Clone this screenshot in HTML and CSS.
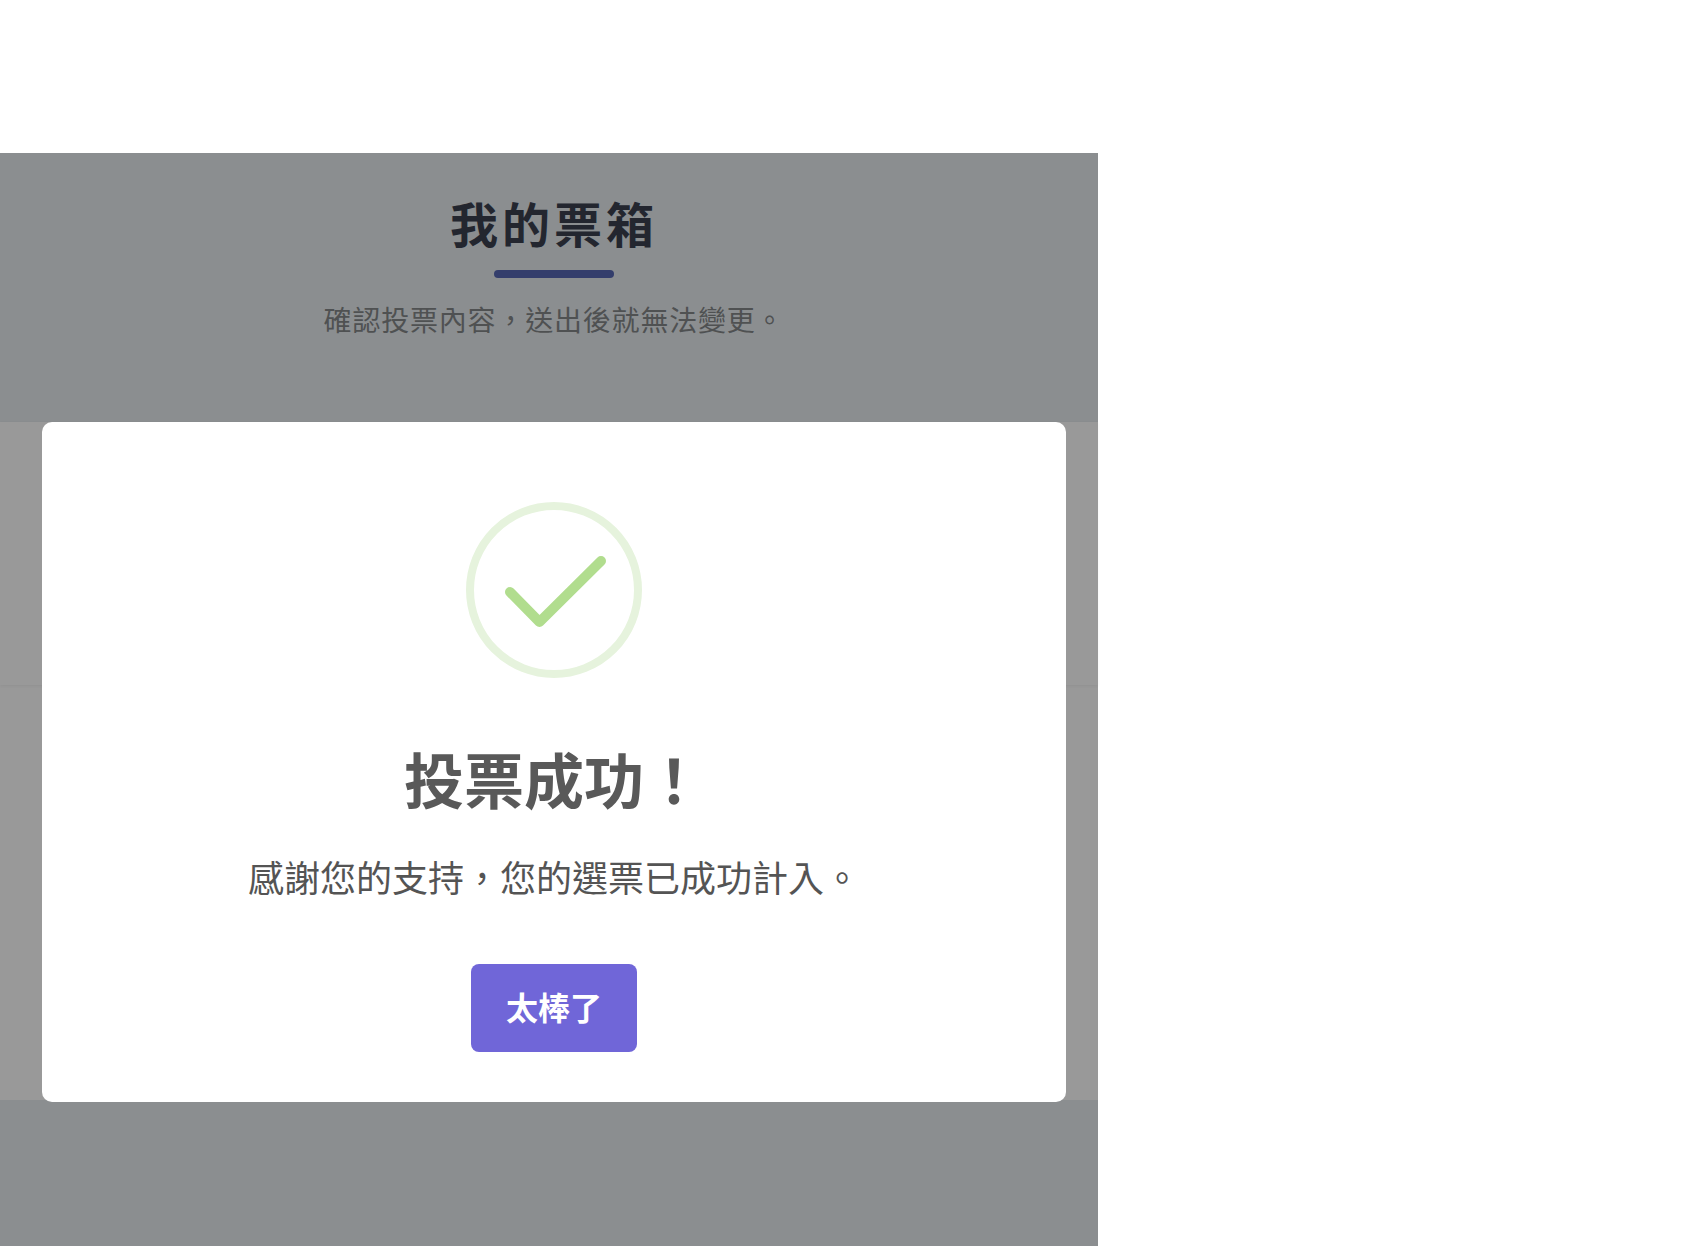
FILE: index.html
```html
<!DOCTYPE html>
<html lang="zh-Hant">

<head>
    <meta charset="UTF-8">
    <meta name="viewport" content="width=device-width, initial-scale=1.0">
    <title>我的票箱</title>
    <link rel="stylesheet" href="styles.css">
</head>

<body>
    <div class="page">
        <div class="header">
            <h1 class="title">我的票箱</h1>
            <div class="underline"></div>
            <p class="subtitle">確認投票內容，送出後就無法變更。</p>
        </div>
        <div class="rows">
            <div class="row first"></div>
            <div class="row second"></div>
        </div>
        <div class="footer"></div>

        <div class="modal">
            <svg class="icon" width="176" height="176" viewBox="0 0 176 176" fill="none">
                <circle cx="88" cy="88" r="84" stroke="#e6f3dd" stroke-width="8" />
                <path d="M44 90L73.5 120L135 59" stroke="#b1dd8e" stroke-width="10" stroke-linecap="round" stroke-linejoin="round" />
            </svg>
            <h2 class="modal-title">投票成功！</h2>
            <div class="modal-text">感謝您的支持，您的選票已成功計入。</div>
            <div class="btn">太棒了</div>
        </div>
    </div>
</body>

</html>
```

FILE: styles.css
```css
* {
    box-sizing: border-box;
}

body {
    margin: 0;
    background-color: #fff;
    font-family: "Noto Sans CJK TC", "Liberation Sans", sans-serif;
}

.page {
    position: relative;
    width: 1098px;
    height: 1246px;
    padding-top: 153px;
    display: flex;
    flex-direction: column;
}

.header {
    height: 269px;
    background-color: #8b8e90;
    display: flex;
    flex-direction: column;
    align-items: center;
    padding: 39px 0 0 10px;
}

.title {
    margin: 0;
    font-size: 48px;
    line-height: 60px;
    font-weight: 700;
    letter-spacing: 4px;
    color: #23262f;
}

.underline {
    width: 120px;
    height: 8px;
    margin-top: 18px;
    border-radius: 4px;
    background-color: #343e6c;
}

.subtitle {
    margin: 17px 0 0;
    font-size: 28px;
    line-height: 48px;
    letter-spacing: 0.8px;
    color: #4f5152;
}

.rows {
    height: 678px;
    background-color: #999;
}

.row.first {
    height: 263px;
    box-shadow: 0 1px 3px rgba(0, 0, 0, 0.06);
}

.footer {
    flex: 1;
    background-color: #8b8e90;
}

.modal {
    position: absolute;
    left: 42px;
    top: 422px;
    width: 1024px;
    height: 680px;
    padding-top: 80px;
    border-radius: 10px;
    background-color: #fff;
    display: flex;
    flex-direction: column;
    align-items: center;
}

.icon {
    display: block;
}

.modal-title {
    margin: 58px 0 0;
    font-size: 60px;
    line-height: 84px;
    font-weight: 700;
    color: #595959;
}

.modal-text {
    margin-top: 31px;
    font-size: 36px;
    line-height: 50px;
    color: #545454;
}

.btn {
    width: 166px;
    height: 88px;
    margin-top: 63px;
    border-radius: 8px;
    background-color: #7066d8;
    color: #fff;
    font-size: 32px;
    font-weight: 700;
    line-height: 84px;
    text-align: center;
}
```
